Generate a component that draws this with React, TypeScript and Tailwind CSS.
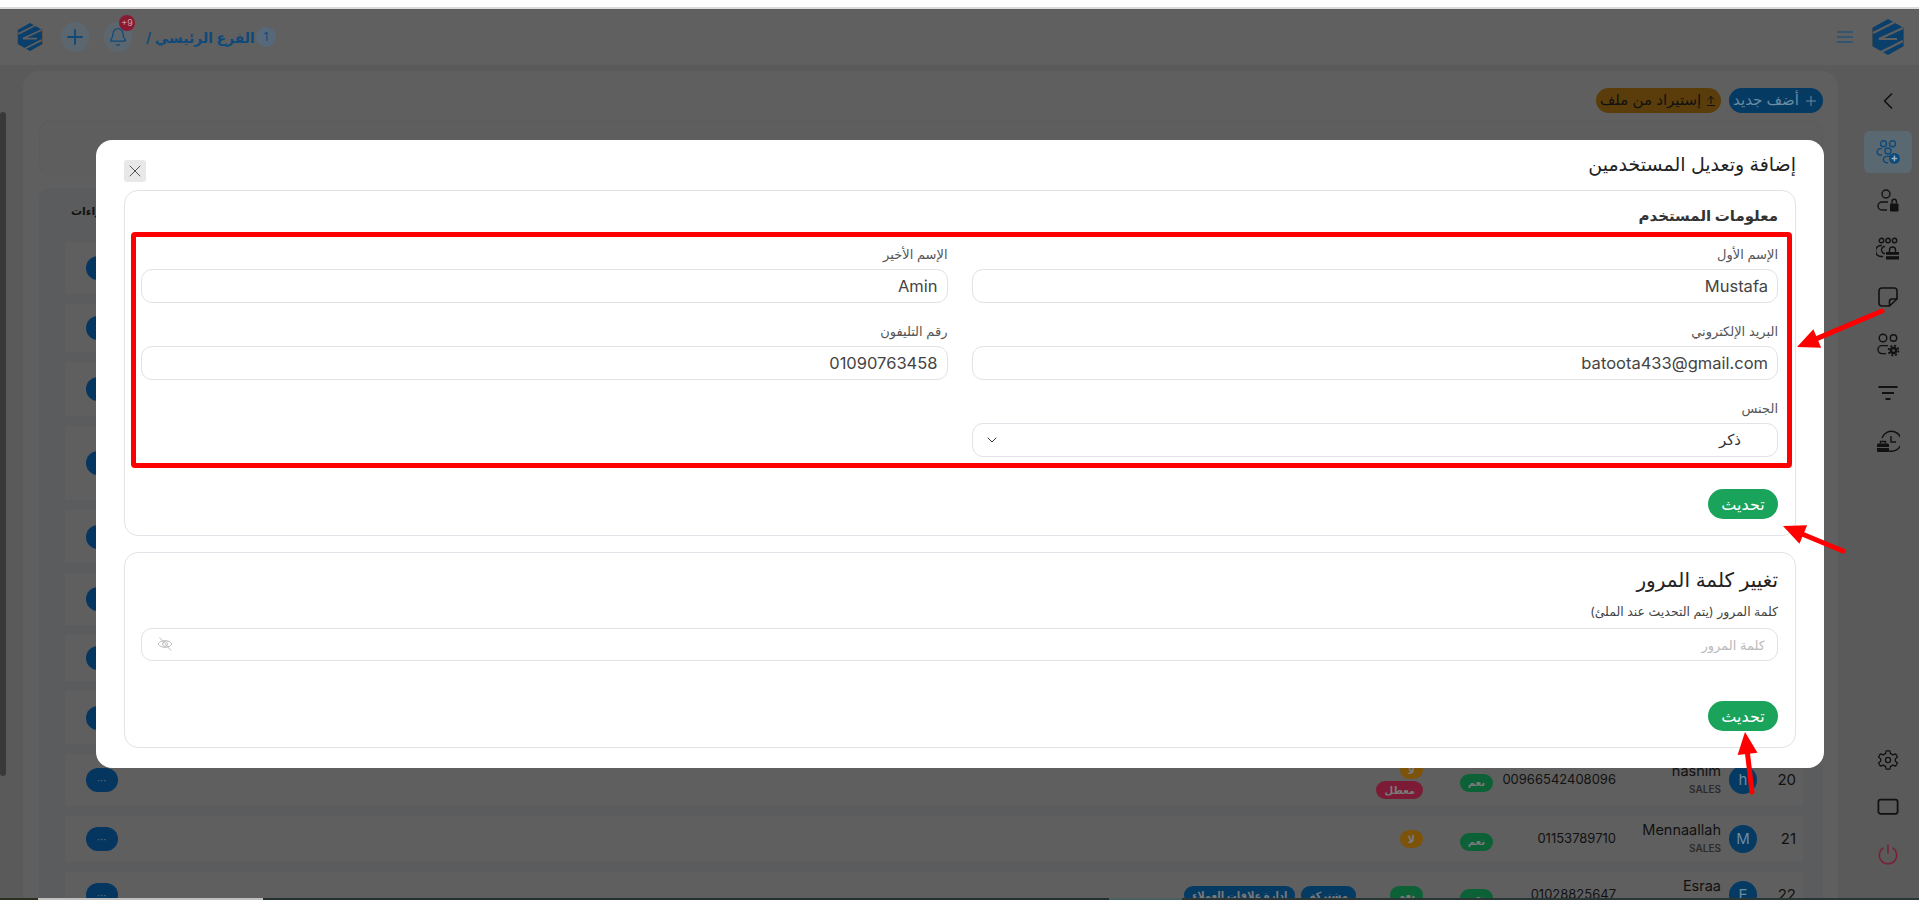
import { ArrowUpFromLine, Bell, ChevronDown, ChevronLeft, Plus, X } from "lucide-react";

type Badge = { label: string; color: string };

type Row = {
  height: string;
  num?: string;
  letter?: string;
  name?: string;
  phone?: string;
  active?: Badge;
  status?: Badge[];
  tags?: Badge[];
};

const green = "bg-[#0d6136]";
const yellow = "bg-[#7d530a]";
const red = "bg-[#7c1b36]";
const blue = "bg-[#053a63]";

const rows: Row[] = [
  { height: "h-[52px]" },
  { height: "h-[48px]" },
  { height: "h-[54px]" },
  { height: "h-[74px]" },
  { height: "h-[53px]" },
  { height: "h-[52px]" },
  { height: "h-[46px]" },
  { height: "h-[53px]" },
  {
    height: "h-[52px]",
    num: "20",
    letter: "h",
    name: "hashim",
    phone: "00966542408096",
    active: { label: "نعم", color: green },
    status: [
      { label: "لا", color: yellow },
      { label: "معطل", color: red },
    ],
  },
  {
    height: "h-[46px]",
    num: "21",
    letter: "M",
    name: "Mennaallah",
    phone: "01153789710",
    active: { label: "نعم", color: green },
    status: [{ label: "لا", color: yellow }],
  },
  {
    height: "h-[46px]",
    num: "22",
    letter: "E",
    name: "Esraa",
    phone: "01028825647",
    active: { label: "نعم", color: green },
    status: [{ label: "نعم", color: green }],
    tags: [
      { label: "مشتركة", color: blue },
      { label: "ادارة علاقات العملاء", color: blue },
    ],
  },
];

function Logo({ className }: { className: string }) {
  return (
    <svg viewBox="0 0 32 36" className={className}>
      <polygon points="16,0 32,9 32,27 16,36 0,27 0,9" fill="#0a3f6b" />
      <path d="M1 14 L23 3 M31 9 L7 20 L25 20 M31 22 L9 33" stroke="#5f5f5f" strokeWidth="2.2" fill="none" />
      <path d="M0 9 V27 M32 9 V27" stroke="#6b5236" strokeWidth="1" />
    </svg>
  );
}

function SideIcon({ name, className }: { name: string; className?: string }) {
  return (
    <svg viewBox="0 0 24 24" fill="none" stroke="currentColor" strokeWidth="1.4" className={className}>
      {name === "add" && (
        <>
          <circle cx="7.5" cy="3.8" r="3" />
          <circle cx="16.5" cy="3.8" r="3" />
          <path d="M6 8.6 H4.4 a3.2 3.2 0 0 0 0 6.4 H6" />
          <circle cx="12" cy="11" r="3" />
          <path d="M15 16.4 H10.6 a3.2 3.2 0 0 0 0 6.4 H12" />
          <circle cx="18.4" cy="18.4" r="5.4" fill="currentColor" stroke="none" />
          <path d="M18.4 15.6 V21.2 M15.6 18.4 H21.2" stroke="#9fb0bd" strokeWidth="1.5" />
        </>
      )}
      {name === "lock" && (
        <>
          <circle cx="10" cy="5" r="4" />
          <path d="M12 13 H6 a4 4 0 0 0 0 8 H11" />
          <rect x="14" y="14.5" width="8.5" height="8" rx="1" fill="currentColor" stroke="none" />
          <path d="M16 14.5 V12.5 a2.2 2.2 0 0 1 4.4 0 V14.5" />
        </>
      )}
      {name === "team" && (
        <>
          <circle cx="5.5" cy="3.5" r="2.2" />
          <circle cx="12" cy="3.5" r="2.2" />
          <circle cx="18.5" cy="3.5" r="2.2" />
          <path d="M6 8.5 H5 a5.5 5.5 0 0 0 0 11 H7 M9 9.5 a3.5 3.5 0 0 0 0 7" />
          <path d="M10 15 h13 v7.5 h-13 z" fill="currentColor" stroke="none" />
          <path d="M13.5 15 v-2 a3 3 0 0 1 6 0 v2" />
          <path d="M10 18.5 h13" stroke="#5a5a5a" />
        </>
      )}
      {name === "note" && (
        <path d="M6 3 H18.5 a2.5 2.5 0 0 1 2.5 2.5 V14 L13.5 21 H6 a3 3 0 0 1 -3 -3 V6 a3 3 0 0 1 3 -3 Z M21 14 H16 a2.5 2.5 0 0 0 -2.5 2.5 V21" strokeWidth="1.6" />
      )}
      {name === "gear" && (
        <>
          <circle cx="7" cy="5" r="3.8" />
          <circle cx="17.5" cy="5" r="3.2" />
          <path d="M12 12.6 H6 a4 4 0 0 0 0 8 H10" />
          <circle cx="17.5" cy="17.5" r="3.8" fill="currentColor" stroke="none" />
          <circle cx="17.5" cy="17.5" r="4.9" strokeWidth="1.8" strokeDasharray="2 1.85" />
          <circle cx="17.5" cy="17.5" r="1.3" fill="#5a5a5a" stroke="none" />
        </>
      )}
      {name === "filter" && <path d="M2.5 6 H21.5 M6 12 H18 M9.5 18 H14.5" strokeWidth="2" />}
      {name === "history" && (
        <>
          <path d="M6 9 a10 10 0 1 1 7 13" />
          <path d="M15 7 V13 H20" />
          <rect x="1" y="14.5" width="12" height="8.5" rx="1.2" fill="currentColor" stroke="none" />
          <path d="M4.5 14.5 v-2 h5 v2" />
          <path d="M1 18.5 h12" stroke="#5a5a5a" strokeWidth="1" />
        </>
      )}
      {name === "settings" && (
        <>
          <path d="M10 2 H14 L14.7 5 L17.4 6.4 L20.3 5.3 L22.3 8.7 L20 10.8 V13.2 L22.3 15.3 L20.3 18.7 L17.4 17.6 L14.7 19 L14 22 H10 L9.3 19 L6.6 17.6 L3.7 18.7 L1.7 15.3 L4 13.2 V10.8 L1.7 8.7 L3.7 5.3 L6.6 6.4 L9.3 5 Z" strokeLinejoin="round" />
          <circle cx="12" cy="12" r="2.8" />
        </>
      )}
      {name === "screen" && <rect x="1.5" y="4" width="21" height="15.5" rx="2.5" strokeWidth="1.9" />}
      {name === "power" && (
        <path d="M12 2 V11 M6.5 5.5 a9.5 9.5 0 1 0 11 0" strokeWidth="1.6" strokeLinecap="round" />
      )}
    </svg>
  );
}

function Pill({ badge }: { badge: Badge }) {
  return (
    <span className={`${badge.color} flex h-[18px] min-w-[21px] items-center justify-center rounded-full px-2 text-[10px] font-bold whitespace-nowrap text-[#7a7a7a]`}>
      {badge.label}
    </span>
  );
}

function TableRow({ row }: { row: Row }) {
  return (
    <div className={`${row.height} flex items-center bg-[#5f5f5f] pr-[7px] pl-[21px]`}>
      {row.num && (
        <>
          <span className="w-[31px] text-[15px] text-[#111]">{row.num}</span>
          <span className="mr-2 flex size-[28px] shrink-0 items-center justify-center rounded-full bg-[#053a63] text-[15px] text-[#6b8ca3]">
            {row.letter}
          </span>
          <div className="mr-2 flex w-[100px] flex-col leading-[18px]">
            <span className="text-[14.5px] text-[#111]">{row.name}</span>
            <span className="text-[10px] font-semibold text-[#2b2b2b]">SALES</span>
          </div>
          <span className="w-[125px] pr-[5px] text-[13px] text-[#111]">{row.phone}</span>
          <div className="w-[68px] pr-[3px]">
            {row.active && <span className="inline-flex"><Pill badge={row.active} /></span>}
          </div>
          <div className="flex w-[67px] flex-col items-start gap-0.5 pr-[5px]">
            {row.status?.map((b) => <Pill key={b.label} badge={b} />)}
          </div>
          <div className="mr-[5px] flex gap-1.5">
            {row.tags?.map((b) => <Pill key={b.label} badge={b} />)}
          </div>
        </>
      )}
      <span className="mr-auto flex h-6 w-8 items-center justify-center rounded-full bg-[#043660] text-[10px] leading-none text-[#707070]">
        ⋯
      </span>
    </div>
  );
}

function Field({ label, value }: { label: string; value: string }) {
  return (
    <div>
      <label className="mb-1.5 block h-[18px] text-[13px] leading-[18px] text-[#555]">{label}</label>
      <input
        readOnly
        value={value}
        className="h-[34px] w-full rounded-[11px] border border-[#e2e2e8] pr-[9px] pl-2.5 text-[16.5px] text-[#444] outline-none"
      />
    </div>
  );
}

function UpdateButton() {
  return (
    <button className="h-[30px] w-[70px] self-start rounded-full bg-[#1aa35b] text-[16px] text-white">تحديث</button>
  );
}

function Arrow({ x1, y1, x2, y2 }: { x1: number; y1: number; x2: number; y2: number }) {
  const len = Math.hypot(x2 - x1, y2 - y1);
  const ux = (x2 - x1) / len;
  const uy = (y2 - y1) / len;
  const bx = x2 - ux * 22;
  const by = y2 - uy * 22;
  return (
    <>
      <line x1={x1} y1={y1} x2={bx} y2={by} stroke="#ff0000" strokeWidth="5" strokeLinecap="round" />
      <polygon
        points={`${x2},${y2} ${bx - uy * 10},${by + ux * 10} ${bx + uy * 10},${by - ux * 10}`}
        fill="#ff0000"
      />
    </>
  );
}

export default function App() {
  const sideIcons = ["lock", "team", "note", "gear", "filter", "history"];
  return (
    <div
      dir="rtl"
      className="relative flex h-[900px] flex-col overflow-hidden bg-[#5a5a5a] font-['Inter','Noto_Sans','DejaVu_Sans',sans-serif]"
    >
      <div className="h-[9px] shrink-0 border-b-2 border-[#dcdcdc] bg-white" />

      {/* top bar */}
      <header className="flex h-14 shrink-0 items-center bg-[#606060] pr-[15px] pl-4">
        <Logo className="h-9 w-8" />
        <svg viewBox="0 0 16 12" className="mr-[19px] h-3 w-4" stroke="#0a4a7c" strokeWidth="1.2">
          <path d="M0 1 H16 M0 6 H16 M0 11 H16" />
        </svg>
        <div className="mr-auto flex items-center text-[#0d4a7a]">
          <span className="ml-px flex size-5 items-center justify-center rounded-full bg-[#56697a] text-xs">1</span>
          <span className="ml-3.5 text-[14px] font-semibold">الفرع الرئيسي /</span>
          <span className="relative ml-[15px] flex h-[30px] w-[28px] items-center justify-center rounded-full bg-[#5c666e]">
            <Bell size={20} strokeWidth={1.5} />
            <span dir="ltr" className="absolute -top-[7px] right-[-3px] flex size-4 items-center justify-center rounded-full bg-[#8a1a33] text-[9px] text-[#c9a0a8]">
              +9
            </span>
          </span>
          <span className="ml-[17px] flex h-[30px] w-[28px] items-center justify-center rounded-full bg-[#5c666e]">
            <Plus size={24} strokeWidth={1.8} />
          </span>
          <Logo className="h-7 w-7" />
        </div>
      </header>

      <div className="flex min-h-0 flex-1">
        {/* side menu */}
        <aside className="flex w-[63px] shrink-0 flex-col items-center pr-[7px] pl-2 text-[#111]">
          <ChevronLeft size={28} strokeWidth={1.4} className="mt-[22px] mb-4" />
          <span className="flex h-[42px] w-12 items-center justify-center rounded-md bg-[#5a6872] text-[#0b4a7c]">
            <SideIcon name="add" className="size-[24px]" />
          </span>
          <div className="mt-4 flex flex-col gap-6">
            {sideIcons.map((name) => (
              <SideIcon key={name} name={name} className="size-6" />
            ))}
          </div>
          <div className="mt-auto mb-[35px] flex flex-col items-center gap-[25px]">
            <SideIcon name="settings" className="size-[22px]" />
            <SideIcon name="screen" className="size-[22px]" />
            <SideIcon name="power" className="size-[22px] text-[#7a1f35]" />
          </div>
        </aside>

        {/* page under the dialog */}
        <main className="min-w-0 flex-1 pt-1.5 pr-[18px] pl-[23px]">
          <div className="h-full rounded-t-2xl bg-[#5f5f5f] pt-[17px] pr-[15px] pl-4">
            <div className="flex gap-2 text-[15px]">
              <span className="flex h-[25px] w-[94px] items-center justify-center gap-1 rounded-full bg-[#053a63] whitespace-nowrap text-[#6b8ca3]">
                <Plus size={16} strokeWidth={1.5} />
                أضف جديد
              </span>
              <span className="flex h-[25px] w-[125px] items-center justify-center gap-1 rounded-full bg-[#5a3d0a] whitespace-nowrap text-[#111]">
                <ArrowUpFromLine size={12} />
                إستيراد من ملف
              </span>
            </div>
            <div className="mt-[7px] h-[55px] rounded-xl border border-[#5c5c5c] bg-[#5e5e5e]" />
            <div className="mt-[13px] rounded-xl bg-[#5b5c5e] pt-3 pr-5 pl-[26px]">
              <div className="h-[42px] pt-[3px] pl-1.5 text-left text-[11px] font-semibold text-[#111]">إجراءات</div>
              <div className="flex flex-col gap-2.5">
                {rows.map((row, i) => (
                  <TableRow key={i} row={row} />
                ))}
              </div>
            </div>
          </div>
        </main>
      </div>

      {/* scrollbar and bottom edge */}
      <div className="absolute top-[112px] left-0 h-[664px] w-1.5 rounded-sm bg-[#383a38]" />
      <div dir="ltr" className="absolute right-0 bottom-0 left-0 flex h-0.5">
        <span className="w-[38px] bg-[#2a3020]" />
        <span className="w-[225px] bg-[#c0c0c0]" />
        <span className="w-[846px] bg-[#243030]" />
        <span className="w-[73px] bg-[#4a5f5f]" />
        <span className="flex-1 bg-[#2a3535]" />
      </div>

      {/* dialog */}
      <div className="absolute top-[140px] left-24 flex h-[628px] w-[1728px] flex-col rounded-2xl bg-white px-7">
        <div className="flex h-[50px] shrink-0 items-start justify-between">
          <h2 className="mt-3.5 text-[19px] leading-[22px] text-[#222]">إضافة وتعديل المستخدمين</h2>
          <button className="mt-5 flex h-[22px] w-[22px] items-center justify-center rounded-[3px] bg-[#e8e8e8] text-[#555]">
            <X size={20} strokeWidth={1.2} />
          </button>
        </div>

        <section className="relative flex h-[346px] shrink-0 flex-col rounded-[14px] border border-[#e2e2e8] pt-[13px] pr-[17px] pl-4">
          <h3 className="mb-[17px] h-6 text-[15px] leading-6 font-bold text-[#333]">معلومات المستخدم</h3>
          <div className="grid grid-cols-2 gap-x-6 gap-y-[19px]">
            <Field label="الإسم الأول" value="Mustafa" />
            <Field label="الإسم الأخير" value="Amin" />
            <Field label="البريد الإلكتروني" value="batoota433@gmail.com" />
            <Field label="رقم التليفون" value="01090763458" />
            <div>
              <label className="mb-1.5 block h-[18px] text-[13px] leading-[18px] text-[#555]">الجنس</label>
              <div className="relative">
                <select className="h-[34px] w-full appearance-none rounded-[11px] border border-[#e2e2e8] bg-white pr-9 text-[15px] text-[#333] outline-none">
                  <option>ذكر</option>
                </select>
                <ChevronDown size={16} strokeWidth={1.5} className="absolute top-[9px] left-3 text-[#333]" />
              </div>
            </div>
          </div>
          <div className="mt-8 flex flex-col">
            <UpdateButton />
          </div>
          {/* annotation */}
          <div className="absolute top-[41px] left-1.5 h-[236px] w-[1661px] rounded-sm border-[5px] border-[#ff0000]" />
        </section>

        <section className="mt-4 flex h-[196px] shrink-0 flex-col rounded-[14px] border border-[#e2e2e8] pt-[13px] pr-[17px] pl-4">
          <h3 className="h-7 text-[20px] leading-7 text-[#222]">تغيير كلمة المرور</h3>
          <p className="mt-[9px] h-[18px] text-[12.5px] leading-[18px] text-[#444]">
            <span className="font-medium">كلمة المرور</span> (يتم التحديث عند الملئ)
          </p>
          <div className="relative mt-[7px]">
            <input
              readOnly
              placeholder="كلمة المرور"
              className="h-[33px] w-full rounded-[11px] border border-[#e2e2e8] px-3 text-[13px] outline-none placeholder:text-[#bbbbbb]"
            />
            <svg viewBox="0 0 16 14" fill="none" stroke="#bdbdbd" strokeWidth="1" className="absolute top-[9px] left-4 h-3.5 w-4">
              <path d="M1 7 C4 2.5 12 2.5 15 7 C12 11.5 4 11.5 1 7 Z" />
              <circle cx="8" cy="7" r="2.4" />
              <path d="M2.5 0.5 L14 13.5" />
            </svg>
          </div>
          <div className="mt-10 flex flex-col">
            <UpdateButton />
          </div>
        </section>
      </div>

      {/* annotation arrows */}
      <svg className="pointer-events-none absolute inset-0 h-[900px] w-[1919px]">
        <Arrow x1={1882} y1={311} x2={1797} y2={347} />
        <Arrow x1={1843} y1={551} x2={1783} y2={526} />
        <Arrow x1={1752} y1={792} x2={1745} y2={732} />
      </svg>
    </div>
  );
}
